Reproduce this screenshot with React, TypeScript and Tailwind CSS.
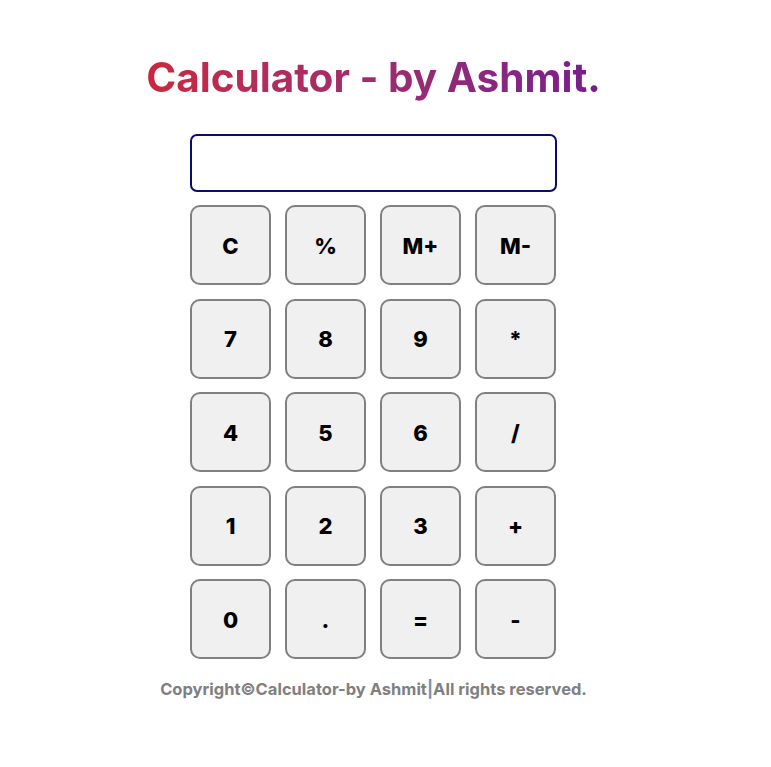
import { useState } from "react";

const KEYS = [
  "C", "%", "M+", "M-",
  "7", "8", "9", "*",
  "4", "5", "6", "/",
  "1", "2", "3", "+",
  "0", ".", "=", "-",
];

export default function App() {
  const [value, setValue] = useState("");
  const [memory, setMemory] = useState(0);

  function press(k: string) {
    if (k === "C") return setValue("");
    if (k === "=") {
      try {
        // eslint-disable-next-line no-new-func
        const r = Function(`return (${value || 0})`)();
        setValue(String(r));
      } catch {
        setValue("Error");
      }
      return;
    }
    if (k === "M+") return setMemory(memory + (Number(value) || 0));
    if (k === "M-") return setMemory(memory - (Number(value) || 0));
    setValue((v) => v + k);
  }

  return (
    <div className="min-h-screen bg-white font-['Inter',sans-serif]">
      <div className="w-[747px] flex flex-col items-center pt-[54px]">
        <h1 className="text-[40.5px] leading-[47px] font-bold bg-gradient-to-r from-[#c9283e] to-[#781b8f] bg-clip-text text-transparent">
          Calculator - by Ashmit.
        </h1>

        <div className="mt-[33px] w-[367px]">
          <input
            value={value}
            readOnly
            className="block w-full h-[58px] rounded-[7px] border-2 border-[#0b0b6e] bg-white px-3 text-right text-2xl outline-none"
          />
          <div className="mt-[13px] grid grid-cols-[repeat(4,81px)] gap-x-[14px] gap-y-[13.5px]">
            {KEYS.map((k) => (
              <button
                key={k}
                onClick={() => press(k)}
                className="h-[80px] rounded-[10px] border-2 border-[#808080] bg-[#f0f0f0] pt-[2px] text-[22px] font-extrabold text-black"
              >
                {k}
              </button>
            ))}
          </div>
        </div>

        <p className="mt-[19px] text-[16.5px] leading-[22px] font-bold text-[#7f7f7f]">
          Copyright©Calculator-by Ashmit<span className="text-[#7f8fae]">|</span>All rights reserved.
        </p>
      </div>
    </div>
  );
}
